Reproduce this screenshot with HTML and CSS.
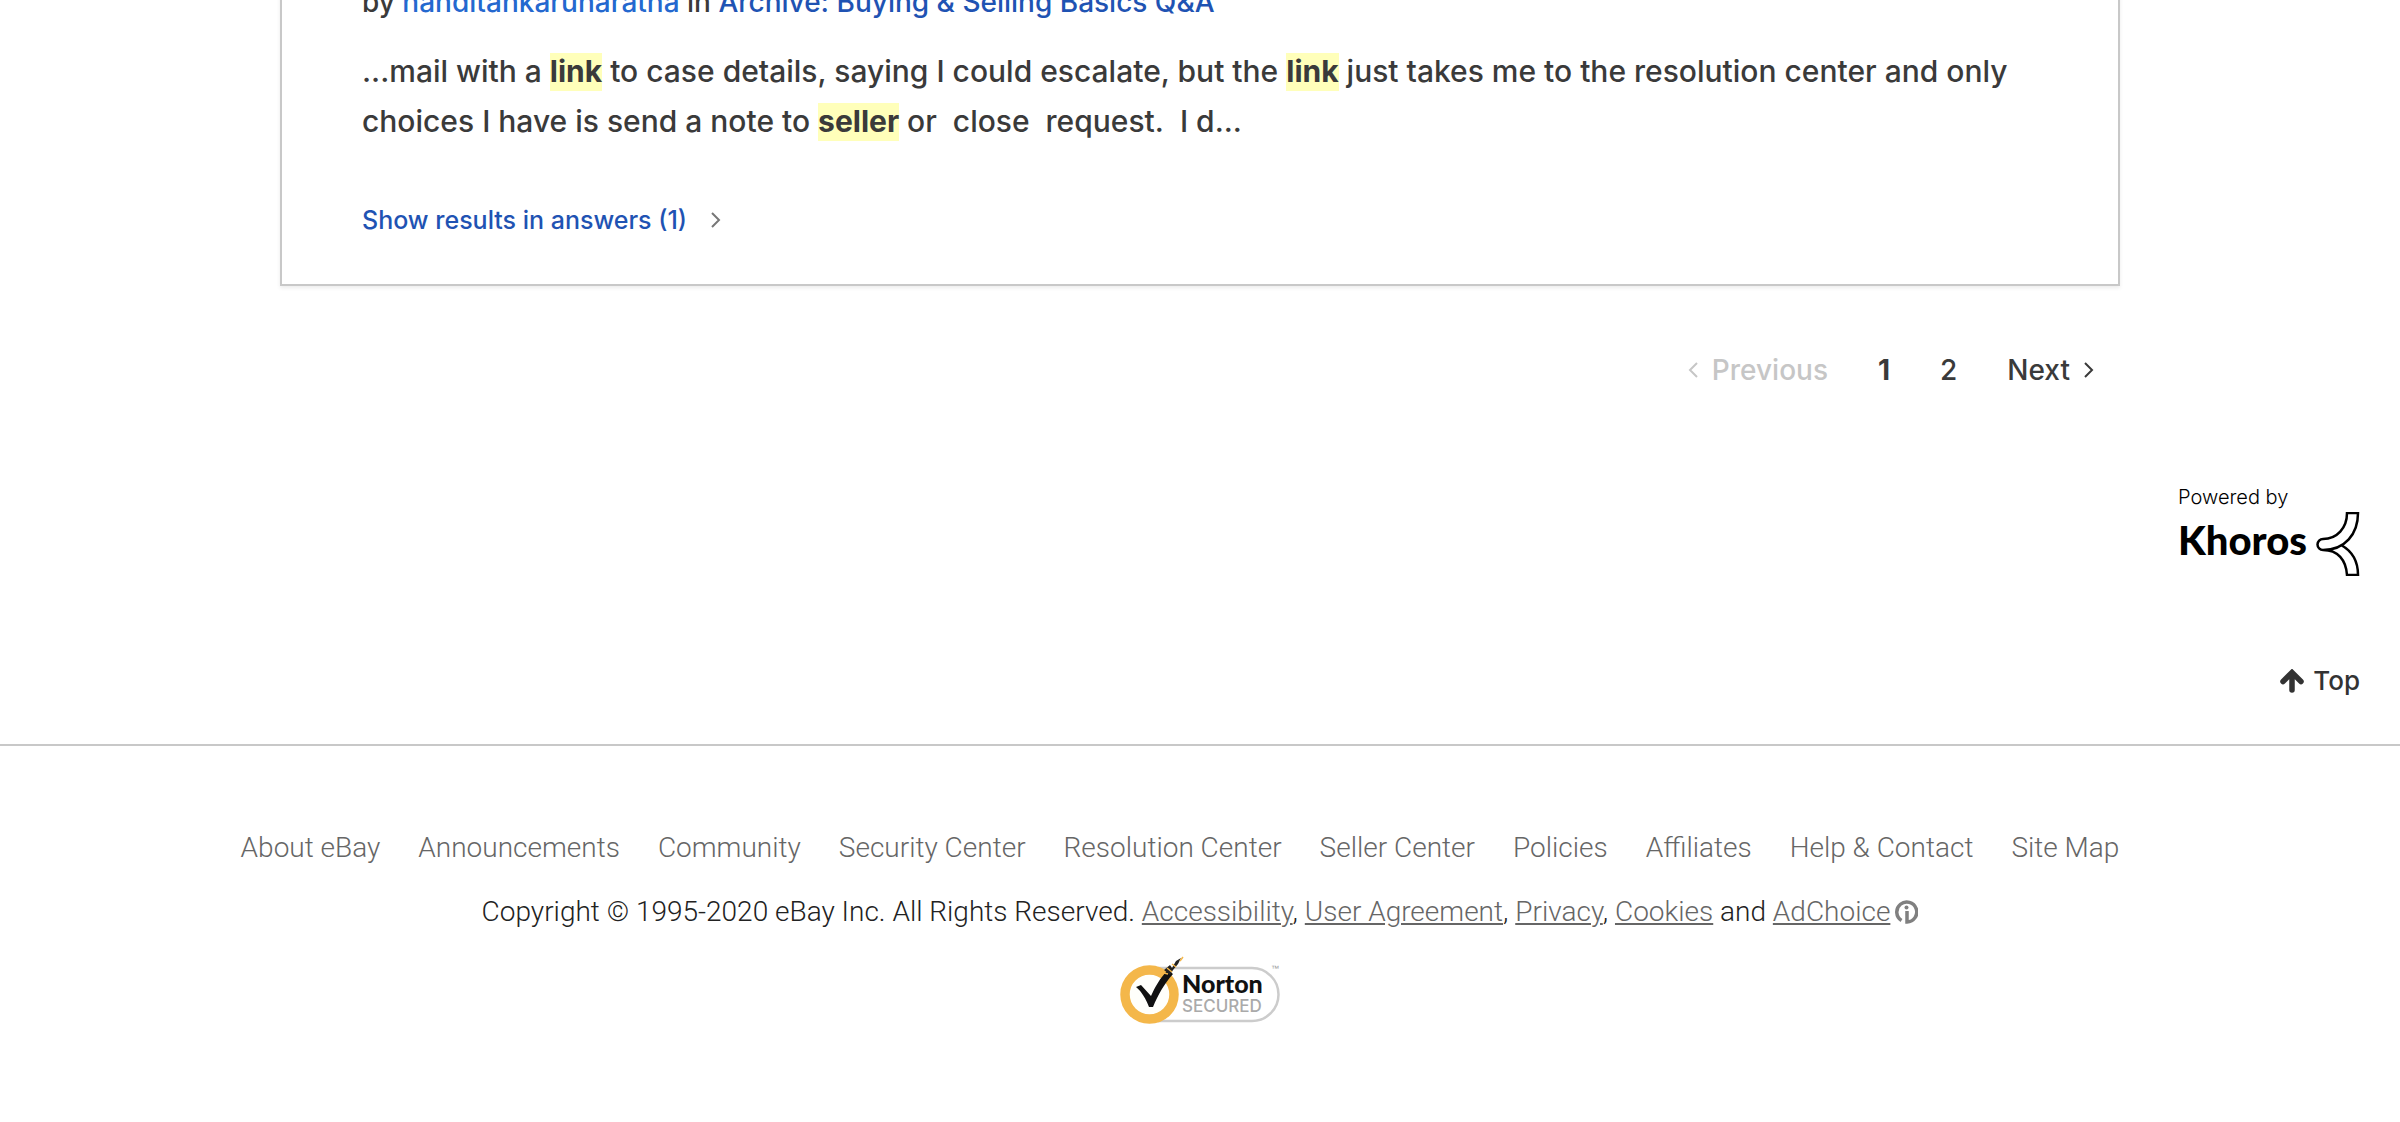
FILE: index.html
```html
<!DOCTYPE html>
<html lang="en">
<head>
<meta charset="utf-8">
<title>Search results - The eBay Community</title>
<link rel="stylesheet" href="styles.css">
</head>
<body>
<main class="results">
  <article class="result">
    <p class="byline">by <a class="author" href="#">nanditankarunaratna</a> in <a href="#">Archive: Buying &amp; Selling Basics Q&amp;A</a></p>
    <p class="excerpt">...mail with a <mark>link</mark> to case details, saying I could escalate, but the <mark>link</mark> just takes me to the resolution center and only<br>choices I have is send a note to <mark>seller</mark> or&nbsp; close&nbsp; request.&nbsp; I d...</p>
    <a class="answers" href="#">Show results in answers (1)
      <svg width="10" height="16" viewBox="0 0 10 16" aria-hidden="true"><path d="M1 1l7 7-7 7" fill="none" stroke="#777" stroke-width="2"/></svg>
    </a>
  </article>
  <nav class="pager" aria-label="Pages">
    <span class="previous"><svg width="10" height="16" viewBox="0 0 10 16" aria-hidden="true"><path d="M9 1L2 8l7 7" fill="none" stroke="currentColor" stroke-width="2"/></svg>Previous</span>
    <b>1</b>
    <a href="#">2</a>
    <a class="next" href="#">Next<svg width="10" height="16" viewBox="0 0 10 16" aria-hidden="true"><path d="M1 1l7 7-7 7" fill="none" stroke="currentColor" stroke-width="2"/></svg></a>
  </nav>
</main>
<aside class="side">
  <a class="khoros" href="#">
    <span class="powered">Powered by</span>
    <span class="brand"><span class="name">Khoros</span>
      <svg width="44" height="64" viewBox="0 0 44 64" aria-hidden="true"><path d="M31 1h11C42 22 29 38 7 38a5.500 5.500 0 0 1 0-11C21 27 31 16 31 1ZM7 38c15 0 23 10 24 25h11C42 50 36 39 25 33" fill="none" stroke="#000" stroke-width="2.500"/></svg>
    </span>
  </a>
  <a class="top" href="#"><svg width="26" height="24" viewBox="0 0 26 24" aria-hidden="true"><path d="M4 12.500L13 3.500l9 9M13 5v16" fill="none" stroke="#333" stroke-width="5.500" stroke-linecap="round"/></svg>Top</a>
</aside>
<footer class="footer">
  <nav class="links" aria-label="eBay">
    <a href="#">About eBay</a><a href="#">Announcements</a><a href="#">Community</a><a href="#">Security Center</a><a href="#">Resolution Center</a><a href="#">Seller Center</a><a href="#">Policies</a><a href="#">Affiliates</a><a href="#">Help &amp; Contact</a><a href="#">Site Map</a>
  </nav>
  <p class="legal">Copyright © 1995-2020 eBay Inc. All Rights Reserved. <a href="#">Accessibility</a>, <a href="#">User Agreement</a>, <a href="#">Privacy</a>, <a href="#">Cookies</a> and <a href="#">AdChoice</a><svg width="24" height="24" viewBox="0 0 24 24" aria-hidden="true"><path d="M7.500 20.500A10 10 0 1 1 13 22V11" fill="none" stroke="#808080" stroke-width="3.500"/><circle cx="12.500" cy="7.500" r="2" fill="#808080"/></svg></p>
  <a class="norton" href="#" aria-label="Norton Secured">
    <svg width="160" height="68" viewBox="0 0 160 68">
      <path d="M38 12h94a26.500 26.500 0 0 1 0 53H38" fill="#fff" stroke="#ccc" stroke-width="2.500"/>
      <circle cx="29.500" cy="38.500" r="24.500" fill="#fffffb" stroke="#f4b74a" stroke-width="9.500"/>
      <path d="M16 31l5-2 10 11C35 31 40 22 48 14l5 4C44 28 38 39 33 51h-4C26 43 22 36 16 31Z" fill="#111"/>
      <path d="M44 14l6-5 2 3 4-7 5-3-3 6-5 6-3 5Z" fill="#222"/>
      <path d="M44 17l4 1M47 12l5 4M52 8l4 3M60 5l3-4" stroke="#f4b74a" stroke-width="1.500"/>
      <text x="62" y="37" class="norton-name">Norton</text>
      <text x="62" y="56" class="norton-secured">SECURED</text>
      <text x="151" y="15" class="norton-tm">™</text>
    </svg>
  </a>
</footer>
</body>
</html>
```
FILE: styles.css
```css
body {
  margin: 0;
  background: #fff;
  color: #3a3a3a;
  font-family: Inter, "Liberation Sans", sans-serif;
  font-weight: 500;
  font-size: 28px;
  overflow-x: hidden;
}
a { color: inherit; text-decoration: none; }
p { margin: 0; }
svg { flex: none; }

.results { max-width: 1840px; margin: 0 auto; }
.result {
  margin-top: -20px;
  padding: 0 80px 42px;
  border: 2px solid #c8c8c8;
  border-top: 0;
  box-shadow: 0 2px 4px rgba(0, 0, 0, .08);
}
.byline { line-height: 44px; }
.byline a { color: #1f53b3; }
.byline .author { color: #2468cf; }
.excerpt { margin-top: 22px; font-size: 30px; line-height: 50px; white-space: nowrap; }
mark { padding-bottom: 2px; background: #ffffba; color: inherit; font-weight: 700; }
.answers {
  display: flex;
  align-items: center;
  gap: 24px;
  margin-top: 52px;
  line-height: 44px;
  font-size: 25px;
  color: #1f53b3;
}

.pager {
  display: flex;
  justify-content: flex-end;
  align-items: center;
  gap: 50px;
  margin-top: 64px;
  padding-right: 26px;
  line-height: 40px;
}
.previous { display: flex; align-items: center; gap: 14px; color: #c6c6c6; }
.next { display: flex; align-items: center; gap: 14px; }

.side {
  display: flex;
  flex-direction: column;
  align-items: flex-end;
  padding: 92px 40px 41px 0;
}
.khoros { width: 182px; color: #000; }
.powered { display: block; font-size: 20px; font-weight: 300; line-height: 30px; }
.brand { display: flex; justify-content: space-between; height: 64px; }
.name { font-family: Lato, sans-serif; font-weight: 900; font-size: 40px; line-height: 56px; }
.top {
  display: flex;
  align-items: center;
  gap: 8px;
  margin-top: 83px;
  color: #333;
  font-size: 26px;
  line-height: 44px;
}

.footer {
  border-top: 2px solid #c8c8c8;
  padding: 80px 24px;
  font-family: Roboto, "Liberation Sans", sans-serif;
  font-weight: 300;
  line-height: 44px;
  text-align: center;
}
.links { display: flex; justify-content: center; gap: 38px; white-space: nowrap; color: #666; padding-right: 40px; }
.legal { margin-top: 20px; color: #222; white-space: nowrap; }
.legal a { color: #666; text-decoration: underline; }
.legal svg { margin-left: 4px; vertical-align: -3px; }
.norton { display: flex; justify-content: center; margin-top: 22px; }
.norton-name { font: 900 25px Lato, sans-serif; fill: #111; }
.norton-secured { font: 500 17px Inter, sans-serif; fill: #aaa; }
.norton-tm { font: 400 8px "Liberation Sans", sans-serif; fill: #999; }
```
